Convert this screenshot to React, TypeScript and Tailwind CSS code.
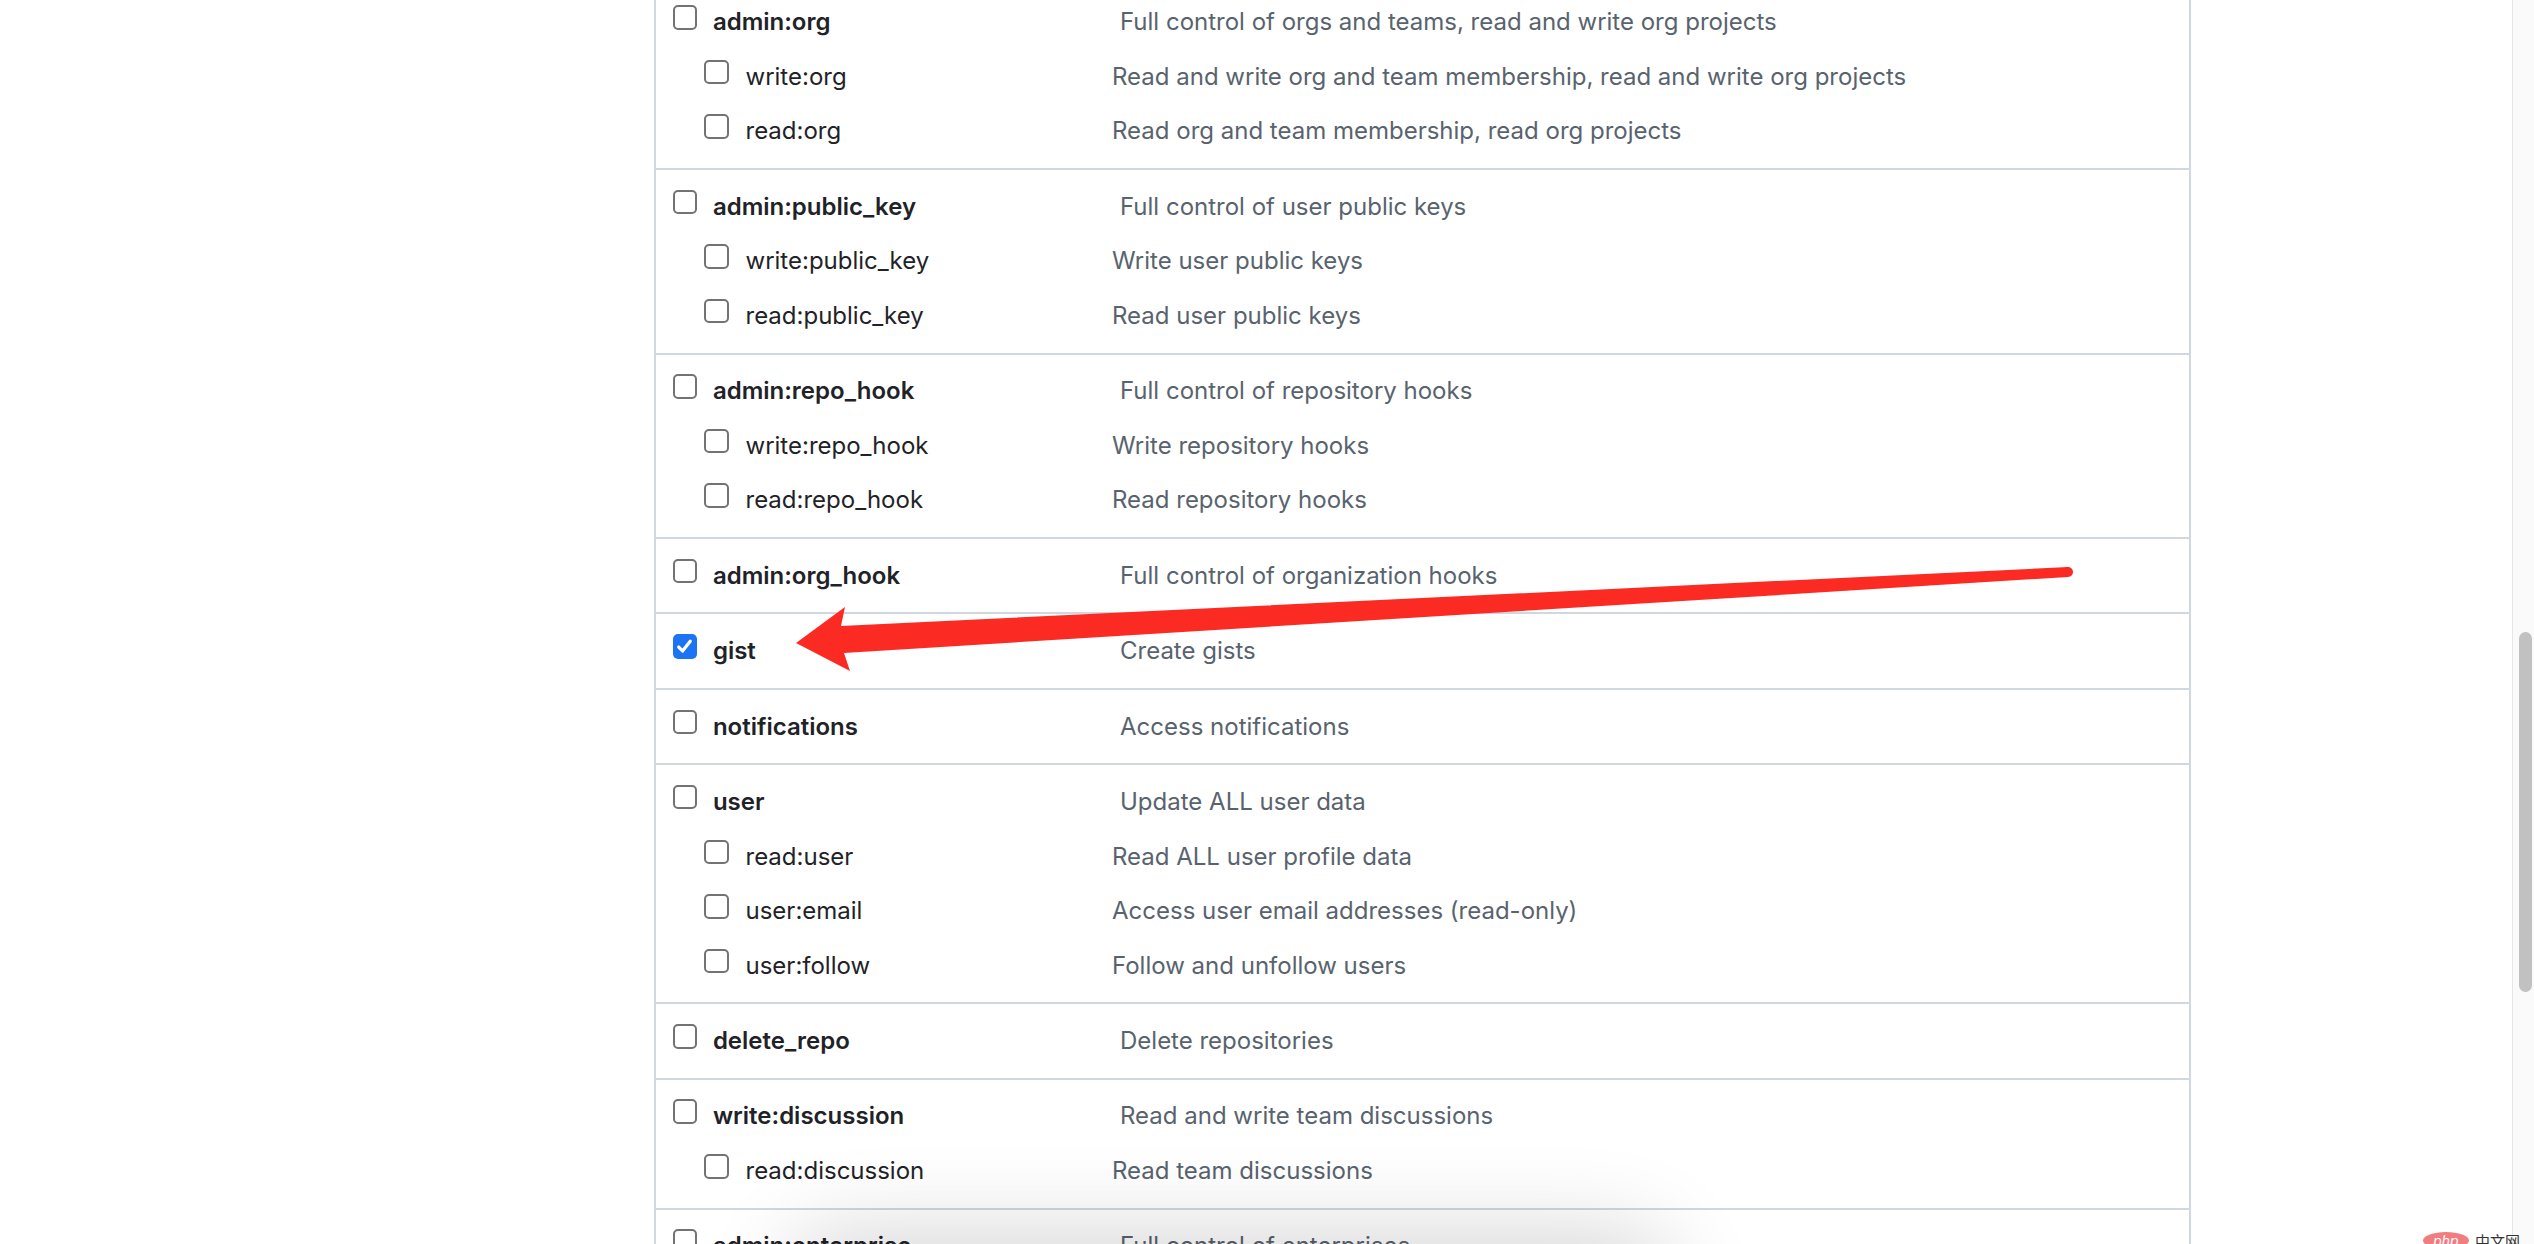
import React from 'react'

type Scope = { name: string; desc: string; checked?: boolean }
type Group = { top: Scope; subs: Scope[] }

const groups: Group[] = [
  {
    top: { name: 'admin:org', desc: 'Full control of orgs and teams, read and write org projects' },
    subs: [
      { name: 'write:org', desc: 'Read and write org and team membership, read and write org projects' },
      { name: 'read:org', desc: 'Read org and team membership, read org projects' },
    ],
  },
  {
    top: { name: 'admin:public_key', desc: 'Full control of user public keys' },
    subs: [
      { name: 'write:public_key', desc: 'Write user public keys' },
      { name: 'read:public_key', desc: 'Read user public keys' },
    ],
  },
  {
    top: { name: 'admin:repo_hook', desc: 'Full control of repository hooks' },
    subs: [
      { name: 'write:repo_hook', desc: 'Write repository hooks' },
      { name: 'read:repo_hook', desc: 'Read repository hooks' },
    ],
  },
  { top: { name: 'admin:org_hook', desc: 'Full control of organization hooks' }, subs: [] },
  { top: { name: 'gist', desc: 'Create gists', checked: true }, subs: [] },
  { top: { name: 'notifications', desc: 'Access notifications' }, subs: [] },
  {
    top: { name: 'user', desc: 'Update ALL user data' },
    subs: [
      { name: 'read:user', desc: 'Read ALL user profile data' },
      { name: 'user:email', desc: 'Access user email addresses (read-only)' },
      { name: 'user:follow', desc: 'Follow and unfollow users' },
    ],
  },
  { top: { name: 'delete_repo', desc: 'Delete repositories' }, subs: [] },
  {
    top: { name: 'write:discussion', desc: 'Read and write team discussions' },
    subs: [{ name: 'read:discussion', desc: 'Read team discussions' }],
  },
  {
    top: { name: 'admin:enterprise', desc: 'Full control of enterprises' },
    subs: [{ name: 'manage_runners:enterprise', desc: 'Manage enterprise runners and runner groups' }],
  },
]

const Checkbox = ({ checked }: { checked?: boolean }) =>
  checked ? (
    <span className="mt-[2px] flex h-[24.5px] w-[24.5px] shrink-0 items-center justify-center rounded-[5px] bg-[#1c74f4]">
      <svg viewBox="0 0 16 16" className="h-[21px] w-[21px]">
        <path d="M3.6 8.4 L6.5 11.4 L12.4 4.0" fill="none" stroke="#fff" strokeWidth="2.5" strokeLinecap="round" strokeLinejoin="round" />
      </svg>
    </span>
  ) : (
    <span className="mt-[2px] block h-[24.5px] w-[24.5px] shrink-0 rounded-[5px] border-[2px] border-[#737373] bg-white" />
  )

const Row = ({ scope, sub }: { scope: Scope; sub?: boolean }) => (
  <div className="flex h-[38px] items-start">
    <div className={sub ? 'flex w-[456px] shrink-0 pl-[48px]' : 'flex w-[464px] shrink-0 pl-[16.7px]'}>
      <Checkbox checked={scope.checked} />
      <span
        className={
          sub
            ? 'ml-[17px] leading-[38px] text-[#1f2328]'
            : 'ml-[15.7px] font-semibold leading-[38px] text-[#1f2328]'
        }
      >
        {scope.name}
      </span>
    </div>
    <span className="leading-[38px] text-[#59636e]">{scope.desc}</span>
  </div>
)

const App = () => {
  return (
    <div className="relative h-screen w-full overflow-hidden bg-white font-['Inter','Liberation_Sans',sans-serif] text-[24px]">
      <div className="flex h-full">
        <div className="min-w-0 flex-1">
          <div className="ml-[654px] mt-[-14.6px] w-[1537px] border-x-2 border-[#d0d7de]">
            {groups.map((g) => (
              <div key={g.top.name} className="flex flex-col gap-[16.6px] border-b-2 border-[#d0d7de] py-[17.7px]">
                <Row scope={g.top} />
                {g.subs.map((s) => (
                  <Row key={s.name} scope={s} sub />
                ))}
              </div>
            ))}
          </div>
        </div>

        {/* scrollbar */}
        <div className="w-[22px] shrink-0 border-l border-[#e6e6e6] bg-[#fafafa] pl-[6px] pt-[632px]">
          <div className="h-[360px] w-[13px] rounded-full bg-[#c1c1c1]" />
        </div>
      </div>

      {/* annotation arrow */}
      <svg className="pointer-events-none absolute left-0 top-0" width="2534" height="1244">
        <polygon
          points="796,643 845,607 841,626 2068,567 2068,577 844,653 850,671"
          fill="#fb2a22"
        />
        <circle cx="2068" cy="572" r="5" fill="#fb2a22" />
      </svg>

      {/* shadow of floating thumbnail below the fold */}
      <div className="pointer-events-none absolute left-[820px] top-[1262px] h-[120px] w-[820px] rounded-[20px] bg-white shadow-[0_0_90px_30px_rgba(0,0,0,0.16)]" />

      {/* watermark */}
      <div className="pointer-events-none absolute bottom-[-5px] right-[14px] flex items-center gap-[6px]">
        <span className="flex h-[17px] w-[46px] items-center justify-center rounded-[50%] bg-[#f27d80] text-[14px] italic leading-none text-white">
          php
        </span>
        <span className="font-['Noto_Sans_CJK_SC',sans-serif] text-[15px] leading-none text-[#333]">中文网</span>
      </div>
    </div>
  )
}

export default App
